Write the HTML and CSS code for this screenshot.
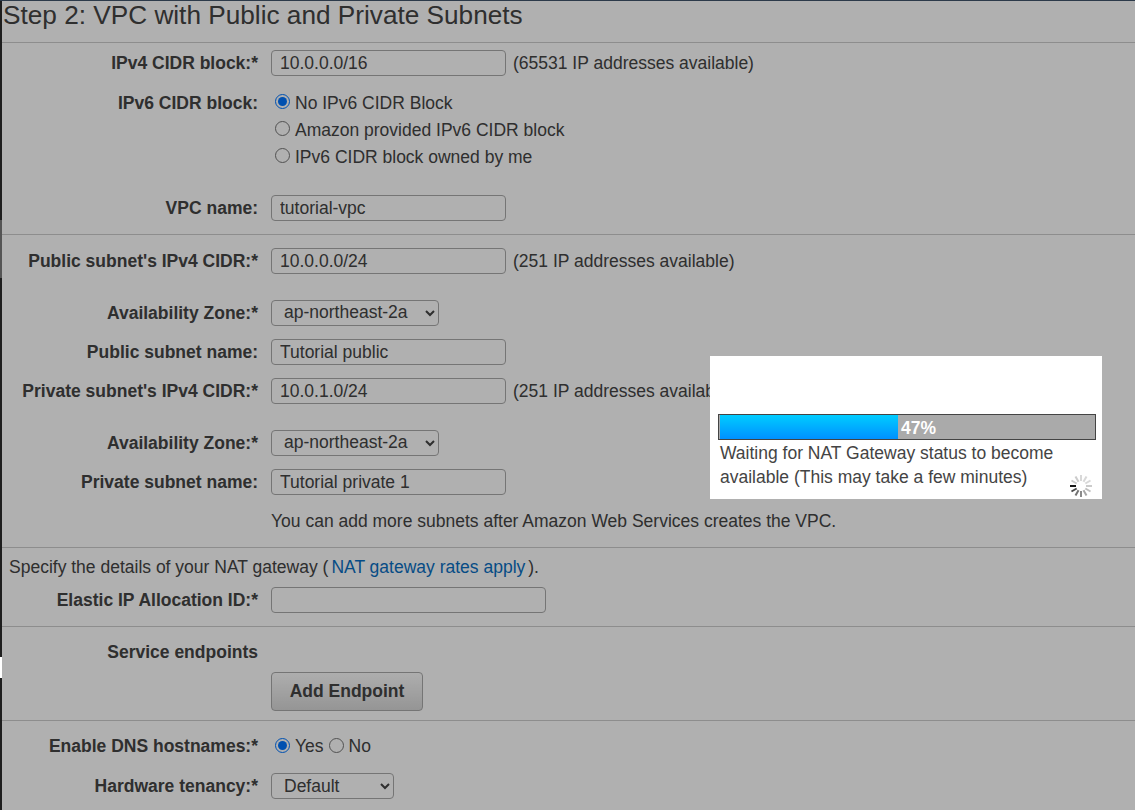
FILE: index.html
```html
<!DOCTYPE html>
<html lang="en">
<head>
	<meta charset="UTF-8">
	<title>Step 2: VPC with Public and Private Subnets</title>
	<link rel="stylesheet" href="styles.css">
</head>
<body>
	<div id="main">
		<h1 class="title">Step 2: VPC with Public and Private Subnets</h1>

		<div class="section first">
			<div class="row h26">
				<label class="lbl">IPv4 CIDR block:*</label>
				<input class="txt" type="text" value="10.0.0.0/16">
				<span class="hint">(65531 IP addresses available)</span>
			</div>
			<div class="row radios gap-ipv6">
				<label class="lbl">IPv6 CIDR block:</label>
				<div class="radio-list">
					<label class="radio"><input type="radio" name="ipv6" checked>No IPv6 CIDR Block</label>
					<label class="radio"><input type="radio" name="ipv6">Amazon provided IPv6 CIDR block</label>
					<label class="radio"><input type="radio" name="ipv6">IPv6 CIDR block owned by me</label>
				</div>
			</div>
			<div class="row h26 gap-vpc">
				<label class="lbl">VPC name:</label>
				<input class="txt" type="text" value="tutorial-vpc">
			</div>
		</div>

		<div class="section subnets">
			<div class="row h26">
				<label class="lbl">Public subnet's IPv4 CIDR:*</label>
				<input class="txt" type="text" value="10.0.0.0/24">
				<span class="hint">(251 IP addresses available)</span>
			</div>
			<div class="row h26 gap-26">
				<label class="lbl">Availability Zone:*</label>
				<select class="sel zone"><option>ap-northeast-2a</option></select>
			</div>
			<div class="row h26 gap-13">
				<label class="lbl">Public subnet name:</label>
				<input class="txt" type="text" value="Tutorial public">
			</div>
			<div class="row h26 gap-13">
				<label class="lbl">Private subnet's IPv4 CIDR:*</label>
				<input class="txt" type="text" value="10.0.1.0/24">
				<span class="hint">(251 IP addresses available)</span>
			</div>
			<div class="row h26 gap-26">
				<label class="lbl">Availability Zone:*</label>
				<select class="sel zone"><option>ap-northeast-2a</option></select>
			</div>
			<div class="row h26 gap-13">
				<label class="lbl">Private subnet name:</label>
				<input class="txt" type="text" value="Tutorial private 1">
			</div>
			<p class="note">You can add more subnets after Amazon Web Services creates the VPC.</p>
		</div>

		<div class="section nat">
			<p class="specify">Specify the details of your NAT gateway (<a href="#">NAT gateway rates apply</a>).</p>
			<div class="row h26 gap-elastic">
				<label class="lbl">Elastic IP Allocation ID:*</label>
				<input class="txt wide" type="text">
			</div>
		</div>

		<div class="section endpoints">
			<div class="row h26">
				<label class="lbl">Service endpoints</label>
			</div>
			<div class="row gap-btn">
				<span class="lbl"></span>
				<button class="btn" type="button">Add Endpoint</button>
			</div>
		</div>

		<div class="section last">
			<div class="row h26">
				<label class="lbl">Enable DNS hostnames:*</label>
				<label class="radio"><input type="radio" name="dns" checked>Yes</label>
				<label class="radio no"><input type="radio" name="dns">No</label>
			</div>
			<div class="row h26 gap-14">
				<label class="lbl">Hardware tenancy:*</label>
				<select class="sel tenancy"><option>Default</option></select>
			</div>
		</div>
	</div>

	<div id="mask"></div>
	<div id="edgeLeft"><span class="e1"></span><span class="e2"></span><span class="e3"></span><span class="e4"></span><span class="e5"></span></div>
	<div id="edgeTop"></div>

	<div id="dialog">
		<div class="bar">
			<div class="fill" style="width: 47.3%"></div>
			<span class="pct">47%</span>
		</div>
		<p class="status">Waiting for NAT Gateway status to become available (This may take a few minutes)</p>
		<svg class="spinner" width="24" height="24" viewBox="-12 -12 24 24">
			<g stroke="#000" stroke-width="2">
				<line x1="-11" y1="0" x2="-5" y2="0" opacity=".9"/>
				<line x1="-11" y1="0" x2="-5" y2="0" opacity=".7" transform="rotate(-30)"/>
				<line x1="-11" y1="0" x2="-5" y2="0" opacity=".55" transform="rotate(-60)"/>
				<line x1="-11" y1="0" x2="-5" y2="0" opacity=".45" transform="rotate(-90)"/>
				<line x1="-11" y1="0" x2="-5" y2="0" opacity=".35" transform="rotate(-120)"/>
				<line x1="-11" y1="0" x2="-5" y2="0" opacity=".25" transform="rotate(-150)"/>
				<line x1="-11" y1="0" x2="-5" y2="0" opacity=".2" transform="rotate(180)"/>
				<line x1="-11" y1="0" x2="-5" y2="0" opacity=".15" transform="rotate(150)"/>
				<line x1="-11" y1="0" x2="-5" y2="0" opacity=".15" transform="rotate(120)"/>
				<line x1="-11" y1="0" x2="-5" y2="0" opacity=".15" transform="rotate(90)"/>
				<line x1="-11" y1="0" x2="-5" y2="0" opacity=".2" transform="rotate(60)"/>
				<line x1="-11" y1="0" x2="-5" y2="0" opacity=".2" transform="rotate(30)"/>
			</g>
		</svg>
	</div>
</body>
</html>
```

FILE: styles.css
```css
*{ margin: 0; padding: 0; box-sizing: border-box; }
html, body{ height: 810px; overflow: hidden; }
body{ background: #fff; color: #444; font-family: "Liberation Sans", Arial, sans-serif; font-size: 17.5px; }
#main{ padding-left: 2px; }

.title{ height: 43px; border-bottom: 1px solid #ccc; padding: 0 0 0 1px; font-size: 26.2px; line-height: 30px; font-weight: normal; }

.section{ border-bottom: 1px solid #ccc; }
.section.first{ height: 192px; padding-top: 7px; }
.section.subnets{ height: 313px; padding-top: 13px; }
.section.nat{ height: 79px; padding-top: 9px; }
.section.endpoints{ height: 94px; padding-top: 12px; }
.section.last{ border-bottom: 0; padding-top: 12px; }

.row{ display: flex; align-items: center; }
.h26{ height: 26px; }
.gap-13{ margin-top: 13px; }
.gap-14{ margin-top: 14px; }
.gap-26{ margin-top: 26px; }
.gap-ipv6{ margin-top: 17px; }
.gap-vpc{ margin-top: 28px; }
.gap-elastic{ margin-top: 10px; }
.gap-btn{ margin-top: 7px; }

.lbl{ flex: none; width: 256px; margin-right: 13px; text-align: right; font-weight: bold; }
.txt{ width: 235px; height: 100%; padding: 0 8px; border: 1px solid #aaa; border-radius: 4px; background: #fff; color: #444; font: inherit; }
.txt.wide{ width: 275px; }
.hint{ margin-left: 7px; }

.sel{ height: 100%; padding-left: 8px; border: 1px solid #aaa; border-radius: 4px; background-color: #fff; color: #444; font: inherit; }
.sel.zone{ width: 168px; padding-bottom: 2px; }
.sel.tenancy{ width: 123px; }

.radios{ align-items: flex-start; }
.radio-list{ display: flex; flex-direction: column; gap: 7px; }
.radio{ display: flex; align-items: center; height: 20px; }
.radio input{ width: 15px; height: 15px; margin: 0 5px 2px 4px; }
.radio.no input{ margin-left: 5px; }
.radio-list .radio input{ margin-bottom: 4px; }

.note{ margin: 16px 0 0 269px; line-height: 20px; }
.specify{ padding-left: 7px; line-height: 20px; }
.specify a{ margin: 0 3px; color: #0a6fc2; text-decoration: none; }

.btn{ width: 152px; height: 39px; border: 1px solid #aaa; border-radius: 4px; background: linear-gradient(#fcfcfc, #d8d8d8); color: #444; font: inherit; font-weight: bold; }

/* page dimmed behind the dialog */
#mask{ position: absolute; left: 0; top: 0; width: 1135px; height: 810px; background: rgba(0,0,0,0.31); }
#edgeTop{ position: absolute; left: 0; top: 0; width: 1135px; height: 1px; background: #2c3a4a; }
#edgeLeft{ position: absolute; left: 0; top: 0; width: 2px; height: 810px; display: flex; flex-direction: column; }
#edgeLeft span{ display: block; }
.e1{ height: 220px; background: #1e1e1e; }
.e2{ height: 58px; background: #555; }
.e3{ height: 379px; background: #1e1e1e; }
.e4{ height: 21px; background: #fff; }
.e5{ height: 132px; background: #1e1e1e; }

#dialog{ position: absolute; left: 710px; top: 356px; width: 392px; height: 143px; padding: 58px 6px 0 8px; background: #fff; }
.bar{ position: relative; height: 26px; border: 1px solid #444; background: #aaa; }
.fill{ height: 100%; margin-left: 1px; background: linear-gradient(#00ccff, #0090ff); }
.pct{ position: absolute; left: 182px; top: 2px; color: #fff; font-weight: bold; line-height: 22px; }
.status{ width: 345px; padding-left: 2px; margin-top: 1px; line-height: 24px; }
.spinner{ position: absolute; left: 359px; top: 118px; }
```
